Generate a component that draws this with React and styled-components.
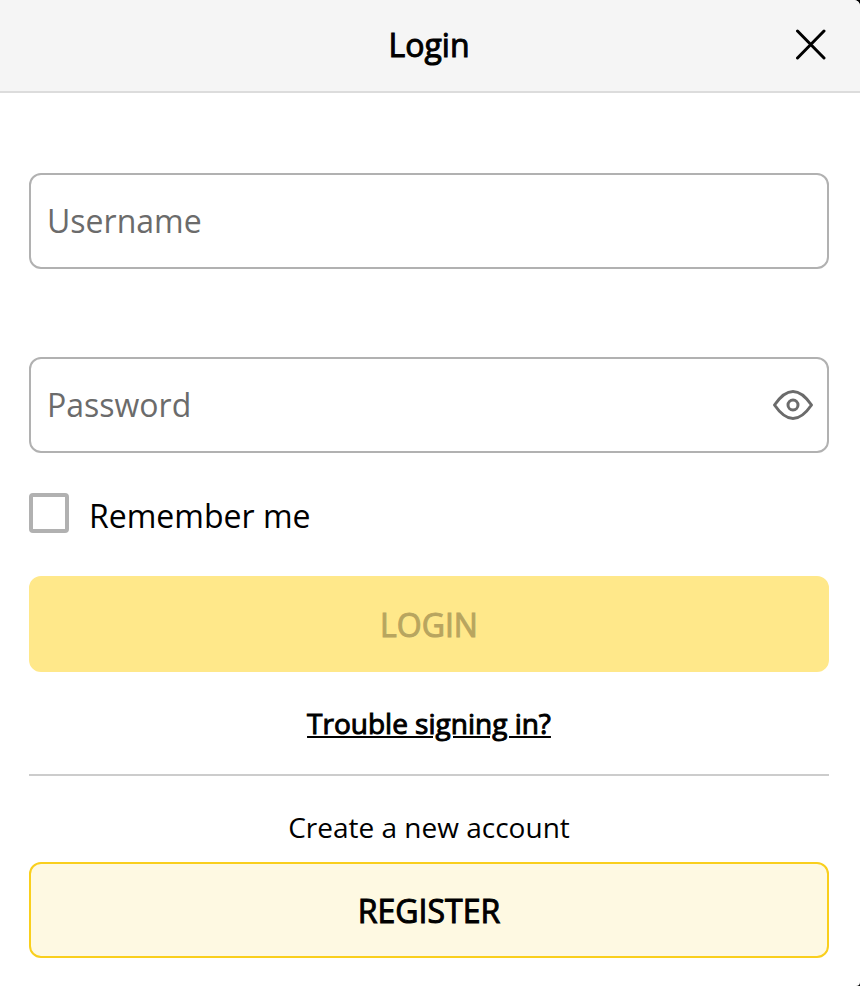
import React, { useState } from 'react'
import styled, { createGlobalStyle } from 'styled-components'

const GlobalStyle = createGlobalStyle`
  *, *::before, *::after {
    box-sizing: border-box;
  }
  body {
    margin: 0;
    background: #000;
    color: #000;
    font-family: 'Open Sans', sans-serif;
  }
`

const Dialog = styled.main`
  min-height: 100vh;
  overflow: hidden;
  border-radius: 0 6px 4px 0;
  background: #fff;
`

const Header = styled.header`
  display: grid;
  grid-template-columns: 48px 1fr 48px;
  align-items: center;
  height: 93px;
  padding: 0 26px 2px 24px;
  border-bottom: 2px solid #dcdcdc;
  background: #f5f5f5;
`

const Title = styled.h1`
  grid-column: 2;
  margin: 0;
  font-size: 32px;
  font-weight: 400;
  line-height: 44px;
  text-align: center;
  -webkit-text-stroke: 1px currentColor;
`

const IconButton = styled.button`
  display: flex;
  align-items: center;
  justify-content: center;
  width: 48px;
  height: 48px;
  padding: 0;
  border: 0;
  background: none;
  color: ${props => props.$color};
  cursor: pointer;
`

const Form = styled.form`
  display: flex;
  flex-direction: column;
  padding: 80px 31px 28px 29px;
`

const Field = styled.div`
  display: flex;
  align-items: center;
  height: 96px;
  margin-bottom: ${props => props.$gap};
  padding: 0 10px 0 16px;
  border: 2px solid #b1b1b1;
  border-radius: 12px;
`

const Input = styled.input`
  flex: 1;
  min-width: 0;
  height: 100%;
  padding: 0 0 1px;
  border: 0;
  outline: 0;
  background: none;
  color: #000;
  font-family: inherit;
  font-size: 32px;

  &::placeholder {
    color: #6b6b6b;
    opacity: 1;
  }
`

const Remember = styled.label`
  display: flex;
  align-items: flex-start;
  gap: 20px;
  align-self: flex-start;
  margin-bottom: 37px;
  font-size: 32px;
  line-height: 46px;
`

const Checkbox = styled.input`
  appearance: none;
  width: 40px;
  height: 40px;
  margin: 0;
  border: 4px solid #b1b1b1;
  border-radius: 4px;

  &:checked {
    background: #ffcc00;
  }
`

const Button = styled.button`
  height: 96px;
  border: 2px solid ${props => props.$border};
  border-radius: 12px;
  background: ${props => props.$background};
  color: ${props => props.$color};
  font-family: inherit;
  font-size: 32px;
  -webkit-text-stroke: 1px currentColor;
`

const HelpLink = styled.a`
  align-self: center;
  margin: 31px 0;
  color: #000;
  font-size: 28px;
  line-height: 40px;
  -webkit-text-stroke: 1px currentColor;
`

const Divider = styled.hr`
  width: 100%;
  margin: 0;
  border: 0;
  border-top: 2px solid #ccc;
`

const Prompt = styled.p`
  margin: 31px 0 15px;
  font-size: 28px;
  line-height: 40px;
  text-align: center;
`

const CloseIcon = () => (
  <svg width="32" height="32" viewBox="0 0 32 32" fill="none" stroke="currentColor" strokeWidth="3" strokeLinecap="round">
    <path d="M3.5 2L30 29M30 2L3.5 29" />
  </svg>
)

const EyeIcon = () => (
  <svg width="44" height="32" viewBox="0 0 44 32" fill="none" stroke="currentColor" strokeWidth="3">
    <path d="M3.5 16C9 8 15 2.5 22 2.5S35 8 40.5 16C35 24 29 29.5 22 29.5S9 24 3.5 16Z" strokeLinejoin="round" />
    <circle cx="22" cy="16" r="5" />
  </svg>
)

const App = () => {
  const [visible, setVisible] = useState(false)

  return (
    <>
      <GlobalStyle />
      <Dialog>
        <Header>
          <Title>Login</Title>
          <IconButton type="button" aria-label="Close" $color="#000">
            <CloseIcon />
          </IconButton>
        </Header>
        <Form onSubmit={e => e.preventDefault()}>
          <Field $gap="88px">
            <Input type="text" placeholder="Username" aria-label="Username" />
          </Field>
          <Field $gap="40px">
            <Input type={visible ? 'text' : 'password'} placeholder="Password" aria-label="Password" />
            <IconButton type="button" aria-label="Show password" $color="#6b6b6b" onClick={() => setVisible(!visible)}>
              <EyeIcon />
            </IconButton>
          </Field>
          <Remember>
            <Checkbox type="checkbox" />
            Remember me
          </Remember>
          <Button type="submit" disabled $background="#ffe88a" $border="#ffe88a" $color="#b8a55f">LOGIN</Button>
          <HelpLink href="#help">Trouble signing in?</HelpLink>
          <Divider />
          <Prompt>Create a new account</Prompt>
          <Button type="button" $background="#fef9e2" $border="#f9cf1d" $color="#000">REGISTER</Button>
        </Form>
      </Dialog>
    </>
  )
}

export default App
